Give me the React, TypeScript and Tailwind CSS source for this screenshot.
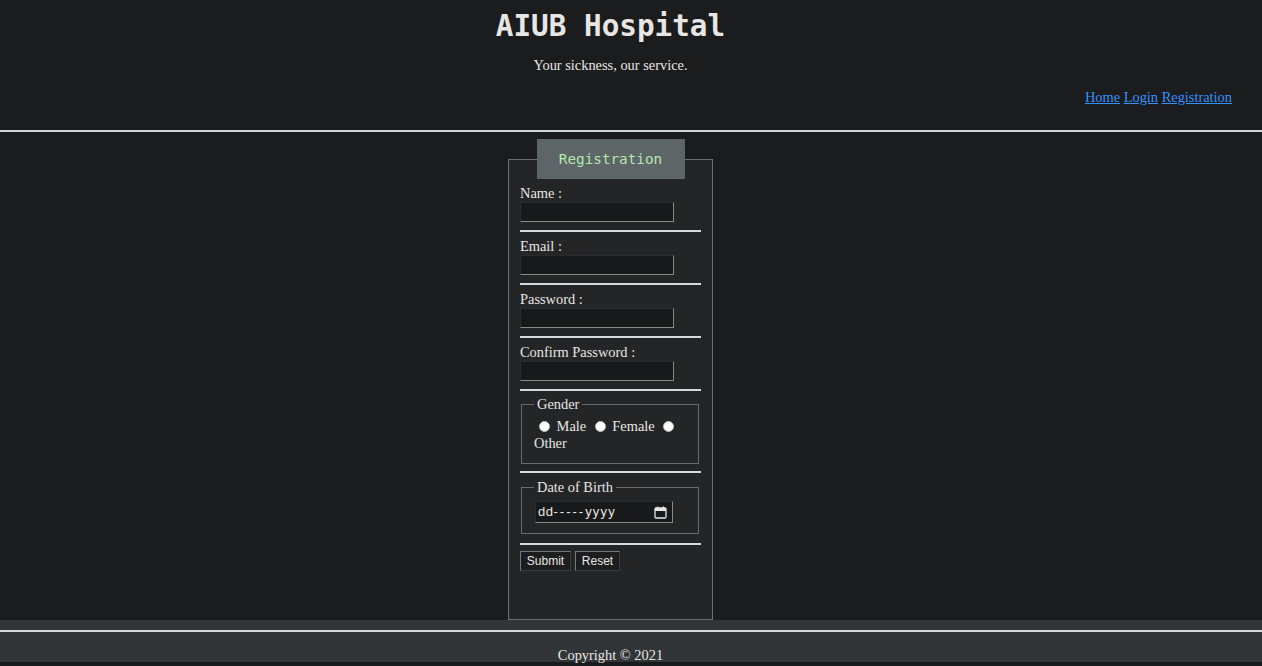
import React from "react";

const serif = "font-['Liberation_Serif',serif]";
const mono = "font-['DejaVu_Sans_Mono','Liberation_Mono',monospace]";
const sans = "font-['Liberation_Sans',Arial,sans-serif]";

function Field({ label, type = "text" }: { label: string; type?: string }) {
  return (
    <div>
      <div className="h-[18px] leading-[18px]">{label}</div>
      <input
        type={type}
        className="block w-[154px] h-[20px] bg-[#18191b] border-t border-l border-t-[#2a2c2e] border-l-[#2a2c2e] border-b border-r border-b-[#8a8a80] border-r-[#8a8a80] outline-none text-[13px]"
      />
      <Rule />
    </div>
  );
}

function Rule({ top = "mt-[8px]" }: { top?: string }) {
  return <hr className={`${top} mb-[5px] w-[181px] border-0 h-[2px] bg-[#d9d9d9]`} />;
}

function Radio({ name }: { name: string }) {
  return (
    <input
      type="radio"
      name={name}
      className="appearance-none inline-block align-[-1px] ml-[5px] mr-[3px] w-[11px] h-[11px] rounded-full bg-white border border-[#bbbbbb]"
    />
  );
}

export default function App() {
  return (
    <div className={`min-h-[666px] bg-[#1b1c1e] text-[#e8e6e3] ${serif} text-[14.4px]`}>
      {/* header */}
      <header className="h-[130px]">
        <div className="w-[1221px] text-center">
          <h1 className={`${mono} pt-[9px] text-[29.3px] font-bold leading-[34px]`}>AIUB Hospital</h1>
          <p className="mt-[13px] leading-[18px]">Your sickness, our service.</p>
        </div>
        <nav className="mt-[14px] pr-[30px] text-right leading-[18px]">
          <a href="#" className="text-[#3391ff] underline">Home</a>{" "}
          <a href="#" className="text-[#3391ff] underline">Login</a>{" "}
          <a href="#" className="text-[#3391ff] underline">Registration</a>
        </nav>
      </header>
      <hr className="border-0 h-[2px] bg-[#d6d6d6]" />

      {/* form */}
      <main className="h-[488px] pt-[7px]">
        <div className="w-[1221px] flex justify-center">
          <fieldset className="w-[205px] h-[481px] border border-[#6e6e6e] bg-[#232527] pl-[11px] pr-[11px]">
            <legend className={`w-[148px] h-[40px] bg-[#5e6567] text-[#b3e7b0] ${mono} text-[14.3px] leading-[40px] text-center`}>
              Registration
            </legend>
            <div className="pt-[5px]">
              <Field label="Name :" />
              <Field label="Email :" type="email" />
              <Field label="Password :" type="password" />
              <Field label="Confirm Password :" type="password" />

              <fieldset className="ml-[1px] -mt-[1px] w-[178px] border border-[#6b6b6b] pl-[12px] pr-[12px] pt-[5px] pb-[11px]">
                <legend className="px-[3px] leading-[18px]">Gender</legend>
                <div className="leading-[17px]">
                  <Radio name="gender" /> Male <Radio name="gender" /> Female <Radio name="gender" /> Other
                </div>
              </fieldset>
              <Rule top="mt-[7px]" />

              <fieldset className="ml-[1px] w-[178px] border border-[#6b6b6b] pl-[13px] pr-[12px] pt-[5px] pb-[10px]">
                <legend className="px-[3px] leading-[18px] -ml-[1px]">Date of Birth</legend>
                <div className={`flex items-center justify-between w-[138px] h-[22px] bg-[#18191b] border-t border-l border-[#2a2c2e] border-b border-r border-b-[#8a8a80] border-r-[#8a8a80] pl-[2px] pr-[5px] ${sans} text-[13px]`}>
                  <span>
                    <span className="tracking-[0.5px]">dd</span>
                    <span className="tracking-[2px]">-----</span>
                    <span className="tracking-[1.2px]">yyyy</span>
                  </span>
                  <svg width="13" height="13" viewBox="0 0 13 13" fill="none">
                    <rect x="1" y="2" width="11" height="10" rx="1" stroke="#e8e6e3" strokeWidth="1.3" />
                    <rect x="1" y="2" width="11" height="3" fill="#e8e6e3" />
                    <rect x="3" y="0.5" width="1.3" height="2.5" fill="#e8e6e3" />
                    <rect x="8.7" y="0.5" width="1.3" height="2.5" fill="#e8e6e3" />
                  </svg>
                </div>
              </fieldset>
              <Rule top="mt-[9px]" />

              <div className={`flex gap-[4px] mt-[6px] ${sans} text-[12px]`}>
                <button className="h-[20px] w-[51px] bg-[#1b1d1e] border-l border-t border-[#777777] border-b-[#3a3a3a] border-r-[#3a3a3a] border-b border-r">
                  Submit
                </button>
                <button className="h-[20px] w-[45px] bg-[#1b1d1e] border-l border-t border-[#777777] border-b-[#3a3a3a] border-r-[#3a3a3a] border-b border-r">
                  Reset
                </button>
              </div>
            </div>
          </fieldset>
        </div>
      </main>

      {/* footer */}
      <footer className="h-[42px] bg-[#323538] pt-[10px]">
        <hr className="border-0 h-[2px] bg-[#d6d6d6]" />
        <div className="w-[1221px] text-center mt-[14px] leading-[18px]">Copyright © 2021</div>
      </footer>
      <div className="h-[20px] bg-[#181a1b]" />
    </div>
  );
}
